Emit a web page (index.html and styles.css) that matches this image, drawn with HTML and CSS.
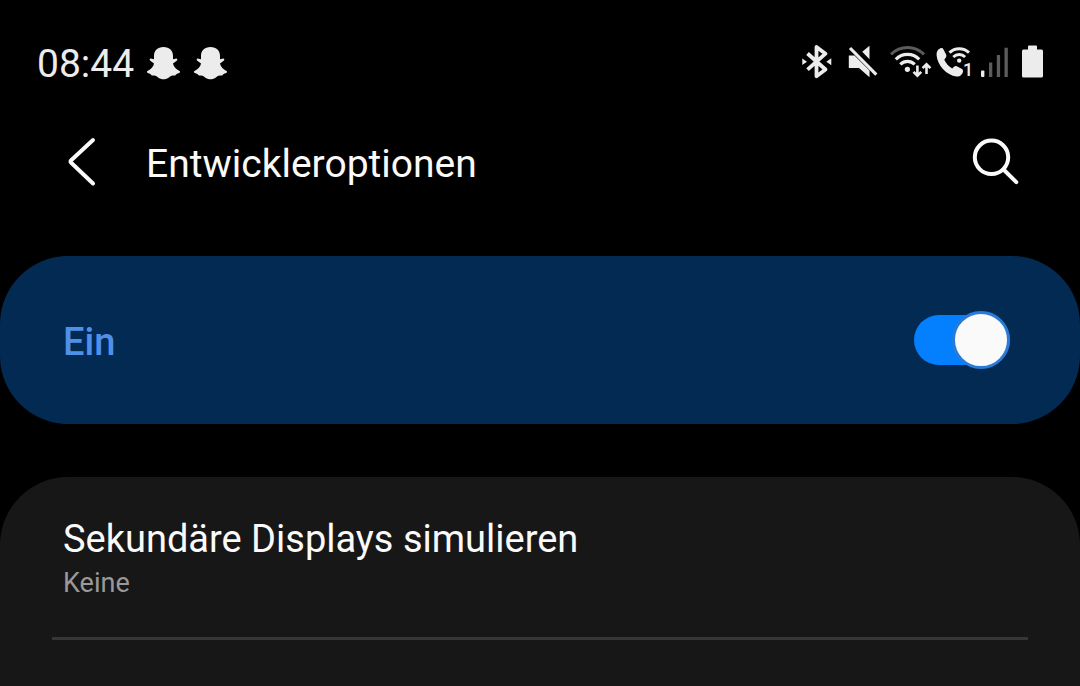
FILE: index.html
```html
<!DOCTYPE html>
<html lang="de">
<head>
    <meta charset="UTF-8">
    <meta name="viewport" content="width=device-width, initial-scale=1">
    <title>Entwickleroptionen</title>
    <link rel="stylesheet" href="styles.css">
</head>
<body>

<div class="status">
    <span class="clock">08:44</span>
    <svg class="ghost" width="35" height="38" viewBox="0 0 35 38">
        <path d="M17.500 2C11.500 2 8 5.500 8 11v3.200L4.800 13.600C3.500 13.600 3.300 15.200 4.300 15.800L8 18.500C7.500 21.500 5 24.300 1.500 26C.5 26.500 .8 27.500 1.800 28C4 28.900 5 29.200 5.800 30.500C8 30.400 10 30.600 11.800 32.200C15.500 34.900 19.500 34.900 23.200 32.200C25 30.600 27 30.400 29.200 30.500C30 29.200 31 28.900 33.200 28C34.200 27.500 34.500 26.500 33.500 26C30 24.300 27.500 21.500 27 18.500L30.700 15.800C31.700 15.200 31.500 13.600 30.200 13.600L27 14.200V11C27 5.500 23.500 2 17.500 2z"/>
    </svg>
    <svg class="ghost" width="35" height="38" viewBox="0 0 35 38">
        <path d="M17.500 2C11.500 2 8 5.500 8 11v3.200L4.800 13.600C3.500 13.600 3.300 15.200 4.300 15.800L8 18.500C7.500 21.500 5 24.300 1.500 26C.5 26.500 .8 27.500 1.800 28C4 28.900 5 29.200 5.800 30.500C8 30.400 10 30.600 11.800 32.200C15.500 34.900 19.500 34.900 23.200 32.200C25 30.600 27 30.400 29.200 30.500C30 29.200 31 28.900 33.200 28C34.200 27.500 34.500 26.500 33.500 26C30 24.300 27.500 21.500 27 18.500L30.700 15.800C31.700 15.200 31.500 13.600 30.200 13.600L27 14.200V11C27 5.500 23.500 2 17.500 2z"/>
    </svg>

    <div class="system">
        <!-- Bluetooth -->
        <svg width="42" height="38" viewBox="0 0 42 38">
            <path class="line" stroke-width="3.8" stroke-linejoin="round" d="M5.500 8.500L23.500 24.500L14.500 31.200V2L23.500 8.700L5.500 24.700"/>
            <path d="M.3 13.400L5 16.700L.3 20zM29.300 13.200V20.200L24.300 16.700z"/>
        </svg>
        <!-- Ton aus -->
        <svg width="38" height="38" viewBox="0 0 38 38">
            <path d="M.8 10.500H6.500L21.500 25.400V32.300L11 23H.8zM14.200 6.800L21.500 .8V14.200z"/>
            <path class="line" stroke-width="3.2" d="M2 3L28.300 29.600"/>
        </svg>
        <!-- WLAN -->
        <svg width="42" height="38" viewBox="0 0 42 38">
            <path class="line dim" stroke-width="3" d="M1 9.300C10.500 .2 24.500 .2 34 9.300"/>
            <path class="line" stroke-width="3.2" d="M5.800 14.300C12.500 7.800 22.500 7.800 29.200 14.300M10.300 19.300C14.500 15.300 20.500 15.300 24.700 19.300"/>
            <circle cx="17.400" cy="24.300" r="2.600"/>
            <path class="line" stroke-width="2.600" d="M27.400 20.500V30M23.500 26.800L27.400 30.700L31.300 26.800M36.500 29V20M32.600 23.200L36.500 19.300L40.400 23.200"/>
        </svg>
        <!-- WLAN-Anruf -->
        <svg width="40" height="38" viewBox="0 0 40 38">
            <path d="M4.500 3.200C1.500 4.200 .3 7 .6 10.500C1.500 20.500 10.500 30.300 20.500 31.500C24 31.800 26.500 29.500 27 26.500C27.100 25.500 26.800 24.500 26 24L20.800 21.200C19.800 20.800 18.800 21 18 21.800L16.200 23.600C12.800 21.600 9.800 18.200 8.300 14.800L10 12.300C10.500 11.500 10.500 10.600 10.200 9.800L7.500 4.500C6.800 3.300 5.800 2.800 4.500 3.200z"/>
            <path class="line" stroke-width="3" d="M13.500 7.600C19 2.500 27.500 2.500 33 7.600M17.300 12C20.700 8.800 25.700 8.800 29.100 12"/>
            <circle cx="23.200" cy="15.600" r="2.200"/>
            <text class="sim" x="27" y="31">1</text>
        </svg>
        <!-- Signal -->
        <svg width="38" height="38" viewBox="0 0 38 38">
            <rect x="1" y="25.500" width="3.400" height="6.500" rx="1"/>
            <path class="dim-fill" d="M9 17.500h3.300V32H9zM16.800 10h3.300V32h-3.300zM24.500 2.700h3.300V32h-3.300z"/>
        </svg>
        <!-- Akku -->
        <svg width="22" height="38" viewBox="0 0 22 38">
            <path d="M7 .5H14a1 1 0 0 1 1 1V4.500H19.500a1.500 1.500 0 0 1 1.500 1.500V31a1.500 1.500 0 0 1-1.500 1.500H1.500A1.500 1.500 0 0 1 0 31V6A1.500 1.500 0 0 1 1.500 4.500H6V1.500a1 1 0 0 1 1-1z"/>
        </svg>
    </div>
</div>

<header class="header">
    <button class="icon-btn" type="button" aria-label="Zurück">
        <svg width="56" height="56" viewBox="0 0 56 56">
            <path d="M33 4L11.200 24.200Q9.800 25.500 11.200 26.800L33 47.500"/>
        </svg>
    </button>
    <h1 class="title">Entwickleroptionen</h1>
    <button class="icon-btn" type="button" aria-label="Suchen">
        <svg width="56" height="56" viewBox="0 0 56 56">
            <circle cx="27.500" cy="21.300" r="16.700"/>
            <path d="M39.500 33.500L52.300 46.200"/>
        </svg>
    </button>
</header>

<main class="content">
    <div class="master">
        <label class="master-label" for="devOptions">Ein</label>
        <input class="switch" type="checkbox" role="switch" id="devOptions" checked>
    </div>

    <section class="list">
        <div class="item">
            <h2 class="item-title">Sekundäre Displays simulieren</h2>
            <p class="item-value">Keine</p>
        </div>
    </section>
</main>

</body>
</html>
```
FILE: styles.css
```css
* {
    box-sizing: border-box;
    margin: 0;
    padding: 0;
}

body {
    display: flex;
    flex-direction: column;
    min-height: 100vh;
    background-color: #000;
    color: #fafafa;
    font-family: Roboto, "Liberation Sans", sans-serif;
}

svg {
    display: block;
    flex-shrink: 0;
}

/* status bar */
.status {
    display: flex;
    align-items: center;
    gap: 12px;
    padding: 40px 36px 0;
    color: #ececec;
    fill: #ececec;
}

.clock {
    font-size: 39px;
    line-height: 48px;
    padding-left: 1px;
}

.system {
    display: flex;
    gap: 4px;
    margin-left: auto;
}

.line {
    fill: none;
    stroke: #ececec;
}

.dim {
    stroke: #5c5c5c;
}

.dim-fill {
    fill: #5c5c5c;
}

.sim {
    font-size: 18px;
    font-weight: 500;
}

/* header */
.header {
    display: flex;
    align-items: center;
    padding: 48px 60px 64px;
}

.title {
    flex: 1;
    padding-left: 30px;
    font-size: 39px;
    font-weight: 400;
    line-height: 56px;
}

.icon-btn {
    border: 0;
    background: none;
    cursor: pointer;
}

.icon-btn svg {
    fill: none;
    stroke: #fafafa;
    stroke-width: 4;
    stroke-linecap: round;
}

/* content */
.content {
    display: flex;
    flex: 1;
    flex-direction: column;
    gap: 53px;
}

.master {
    display: flex;
    align-items: flex-start;
    justify-content: space-between;
    padding: 56px 70px 52px 63px;
    border-radius: 68px;
    background-color: #032a52;
}

.master-label {
    color: #4f90ea;
    font-size: 38px;
    font-weight: 500;
    line-height: 60px;
}

.switch {
    appearance: none;
    display: flex;
    align-items: center;
    width: 96px;
    height: 50px;
    margin-top: 3px;
    border-radius: 25px;
    background-color: #0480ff;
    cursor: pointer;
}

.switch::after {
    content: "";
    flex-shrink: 0;
    width: 52px;
    height: 52px;
    border: 3px solid #2a7bd6;
    border-radius: 50%;
    background-color: #fafafa;
}

.switch:checked::after {
    margin-left: auto;
}

.list {
    flex: 1;
    padding: 0 52px;
    border-radius: 68px 68px 0 0;
    background-color: #171717;
}

.item {
    padding: 39px 11px 37px;
    border-bottom: 3px solid #363636;
}

.item-title {
    font-size: 38px;
    font-weight: 400;
    line-height: 46px;
}

.item-value {
    margin-top: 4px;
    color: #999;
    font-size: 27px;
    line-height: 34px;
}
```
